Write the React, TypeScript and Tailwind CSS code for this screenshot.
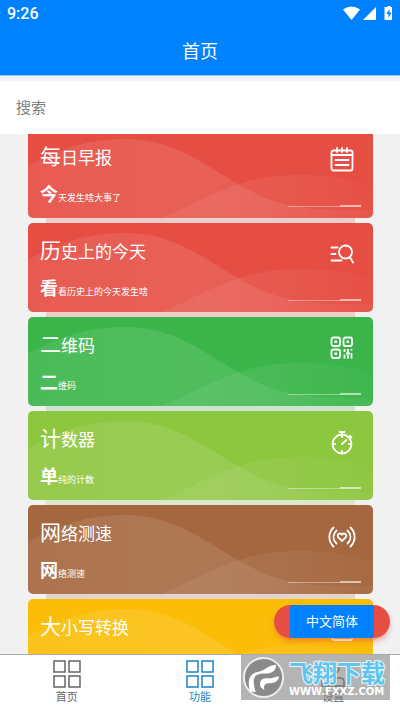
import { useState } from "react";
import type { ReactNode } from "react";

type Tool = {
  title: string;
  subtitle: string;
  card: string;
  shade: string;
  icon: ReactNode;
};

const tools: Tool[] = [
  {
    title: "每日早报",
    subtitle: "今天发生啥大事了",
    card: "bg-[#e64d43]",
    shade: "bg-[#e64d43]/20",
    icon: (
      <>
        <rect x="1.5" y="3.5" width="21" height="20" rx="2" />
        <path d="M7 1v4M12 1v4M17 1v4M1.5 8h21M5.5 13h13M5.5 18h13" />
      </>
    ),
  },
  {
    title: "历史上的今天",
    subtitle: "看看历史上的今天发生啥",
    card: "bg-[#e64d43]",
    shade: "bg-[#e64d43]/20",
    icon: (
      <>
        <circle cx="15.500" cy="11" r="6.500" />
        <path d="M20 16.500l3 5M1.500 6.500h6M1.500 13h4M1.500 19.500h10" />
      </>
    ),
  },
  {
    title: "二维码",
    subtitle: "二维码",
    card: "bg-[#3bb54a]",
    shade: "bg-[#3bb54a]/20",
    icon: (
      <>
        <rect x="1.500" y="2.500" width="8.500" height="8.500" rx="2" />
        <rect x="13.500" y="2.500" width="8.500" height="8.500" rx="2" />
        <rect x="1.500" y="14.500" width="8.500" height="8.500" rx="2" />
        <path d="M4.500 6.750h2.500M16.500 6.750h2.500M4.500 18.750h2.500" strokeWidth="2.500" strokeLinecap="butt" />
        <path
          d="M14.500 14v3M14.500 19.500v4M18 14v4M18 20v3.500M21.500 14v1.500M21.500 18v5.500M16 18.500h4"
          strokeLinecap="butt"
        />
      </>
    ),
  },
  {
    title: "计数器",
    subtitle: "单纯的计数",
    card: "bg-[#8dc63f]",
    shade: "bg-[#8dc63f]/20",
    icon: (
      <>
        <circle cx="12" cy="15" r="9.500" />
        <path d="M9.500 3h5M12 3v5M20 7l1.500 1.500M12 15l4.500-4M12 22v2M3 15h2M19 15h2" />
      </>
    ),
  },
  {
    title: "网络测速",
    subtitle: "网络测速",
    card: "bg-[#a5673f]",
    shade: "bg-[#a5673f]/20",
    icon: (
      <>
        <path d="M12 18l-3.700-3.700c-2-2.500 1.500-5.300 3.700-2.700 2.200-2.600 5.700.2 3.700 2.700z" />
        <path d="M6.500 7.500c-4 4-4 9 0 13M3.500 4.500c-5.500 5.500-5.500 13.500 0 19M17.500 7.500c4 4 4 9 0 13M20.500 4.500c5.500 5.500 5.500 13.500 0 19" />
      </>
    ),
  },
  {
    title: "大小写转换",
    subtitle: "大小写转换",
    card: "bg-[#fbbd08]",
    shade: "bg-[#fbbd08]/20",
    icon: <rect x="2" y="3" width="20" height="20" rx="2" />,
  },
];

const GridIcon = () => (
  <svg viewBox="0 0 28 28" className="size-7" fill="none" stroke="currentColor" strokeWidth="1.500">
    <rect x="1" y="1" width="11" height="11" />
    <rect x="16" y="1" width="11" height="11" />
    <rect x="1" y="16" width="11" height="11" />
    <rect x="16" y="16" width="11" height="11" />
  </svg>
);

const UserIcon = () => (
  <svg viewBox="0 0 28 28" className="size-7" fill="none" stroke="currentColor" strokeWidth="1.500">
    <circle cx="14" cy="8" r="6" />
    <path d="M3 26v-4q0-4 4-4h14q4 0 4 4v4z" />
  </svg>
);

const tabs = [
  { label: "首页", icon: GridIcon },
  { label: "功能", icon: GridIcon },
  { label: "设置", icon: UserIcon },
];

const StatusBar = () => (
  <div className="flex h-7 items-center justify-between px-[7px]">
    <span className="font-[Roboto,sans-serif] text-base font-medium">9:26</span>
    <svg viewBox="0 0 50 16" className="h-4 w-[50px]" fill="currentColor">
      <path d="M0 3.500Q8.500-2.500 17 3.500L8.500 14z" />
      <path d="M20 14L33 1v13z" />
      <path d="M43 1h1.500V0h3v1H49v13h-7.500V1z" />
      <path d="M46.500 3l-3 5h2v4l3-5.500h-2z" fill="#0081ff" />
    </svg>
  </div>
);

const Waves = () => (
  <svg viewBox="0 0 345 89" preserveAspectRatio="none" className="absolute inset-0 size-full">
    <defs>
      <linearGradient id="wave" x1="0" y1="0" x2="1" y2="0">
        <stop offset="0" stopColor="#fff" stopOpacity="0.08" />
        <stop offset="0.5" stopColor="#fff" stopOpacity="0.11" />
        <stop offset="1" stopColor="#fff" stopOpacity="0.03" />
      </linearGradient>
      <linearGradient id="swell" x1="0" y1="0" x2="1" y2="0">
        <stop offset="0" stopColor="#fff" stopOpacity="0.06" />
        <stop offset="0.5" stopColor="#fff" stopOpacity="0.07" />
        <stop offset="1" stopColor="#fff" stopOpacity="0.02" />
      </linearGradient>
    </defs>
    <path d="M0 37C45 12 75 10 98 10C145 10 175 35 210 55C245 75 265 82 345 81V89H0z" fill="url(#wave)" />
    <path d="M133 89C185 68 210 46 273 46C305 46 325 50 345 57V89z" fill="url(#swell)" />
  </svg>
);

const ToolCard = ({ tool }: { tool: Tool }) => (
  <li className="relative pb-[5px]">
    <div className={`absolute inset-x-[18px] bottom-0 h-3 ${tool.shade}`} />
    <a
      href="#"
      className={`relative flex h-[89px] justify-between overflow-hidden rounded-[5px] px-3 text-white ${tool.card}`}
    >
      <Waves />
      <div className="relative flex flex-col gap-2 pt-[10px]">
        <h2 className="text-[17px] leading-8 first-letter:text-[21px]">{tool.title}</h2>
        <p className="text-[9px] leading-6 first-letter:text-[18px] first-letter:font-bold">{tool.subtitle}</p>
      </div>
      <div className="relative flex w-[73px] flex-col justify-between pb-[11px] pt-[18px]">
        <svg
          viewBox="0 0 24 24"
          className="mr-[7px] size-6 self-end overflow-visible"
          fill="none"
          stroke="currentColor"
          strokeWidth="1.800"
          strokeLinecap="round"
        >
          {tool.icon}
        </svg>
        <div className="flex items-center">
          <span className="h-px flex-1 bg-white/40" />
          <span className="h-0.5 w-[21px] bg-white/60" />
        </div>
      </div>
    </a>
  </li>
);

const Watermark = () => (
  <div className="pointer-events-none absolute right-[10px] top-0 flex h-[45px] w-[149px] items-center gap-1 bg-[#828282]/60 pl-px text-white">
    <svg viewBox="0 0 44 44" className="size-[43px] shrink-0">
      <circle cx="22" cy="22" r="20" fill="#8a8a8a" stroke="#eee" strokeWidth="2" />
      <path
        d="M8 36C5 25 8 17 17 16c7-1 8-6 18-7 0 6-4 9-11 9-8 0-12 2-12 8 0 4 1 7 2 11z"
        fill="#fff"
      />
      <path d="M19 32c-2-7 2-10 8-9 5 0 7-2 11-2-1 6-6 7-11 7-4 0-5 3-4 7z" fill="#fff" />
    </svg>
    <div className="flex flex-col whitespace-nowrap">
      <span className="text-2xl font-bold leading-7 text-[#5fc4ee] [paint-order:stroke] [-webkit-text-stroke:2px_#e8f6fc]">
        飞翔下载
      </span>
      <span className="font-['DejaVu_Sans',sans-serif] text-[10px] font-bold leading-3">WWW.FXXZ.COM</span>
    </div>
  </div>
);

const App = () => {
  const [active, setActive] = useState("功能");
  const [query, setQuery] = useState("");

  return (
    <div className="flex h-screen flex-col overflow-hidden bg-[#f1f1f1] font-['Noto_Sans_CJK_SC',sans-serif]">
      <header className="h-[76px] shrink-0 border-b border-[#8ec8fb] bg-[#0081ff] text-white">
        <StatusBar />
        <h1 className="text-center text-lg leading-[44px]">首页</h1>
      </header>

      <input
        type="search"
        aria-label="搜索"
        placeholder="搜索"
        value={query}
        onChange={(e) => setQuery(e.target.value)}
        className="mt-[5px] h-[53px] w-full shrink-0 bg-white px-4 pb-0.5 text-[15px] outline-none placeholder:text-[#808080]"
      />

      <main className="relative min-h-0 flex-1">
        <ul className="h-full overflow-hidden pl-7 pr-[27px]">
          {/* the list is scrolled a little under the search box */}
          <li className="-mt-[5px]" />
          {tools
            .filter((tool) => tool.title.includes(query))
            .map((tool) => (
              <ToolCard key={tool.title} tool={tool} />
            ))}
        </ul>

        {/* Language switch */}
        <div className="absolute bottom-4 right-[10px] rounded-full bg-[#e64d43] px-4 shadow-md shadow-[#e64d43]/40">
          <button type="button" className="h-[33px] w-[84px] rounded-[3px] bg-[#0081ff] pb-0.5 text-[13px] text-white">
            中文简体
          </button>
        </div>
      </main>

      <nav className="relative grid h-14 shrink-0 grid-cols-3 border-t border-[#aaa] bg-white">
        {tabs.map((tab) => (
          <button
            key={tab.label}
            type="button"
            onClick={() => setActive(tab.label)}
            className={`flex flex-col items-center pt-[5px] ${active === tab.label ? "text-[#1684c5]" : "text-[#666]"}`}
          >
            <tab.icon />
            <span className="text-[11px] leading-4">{tab.label}</span>
          </button>
        ))}
        <Watermark />
      </nav>
    </div>
  );
};

export default App;
